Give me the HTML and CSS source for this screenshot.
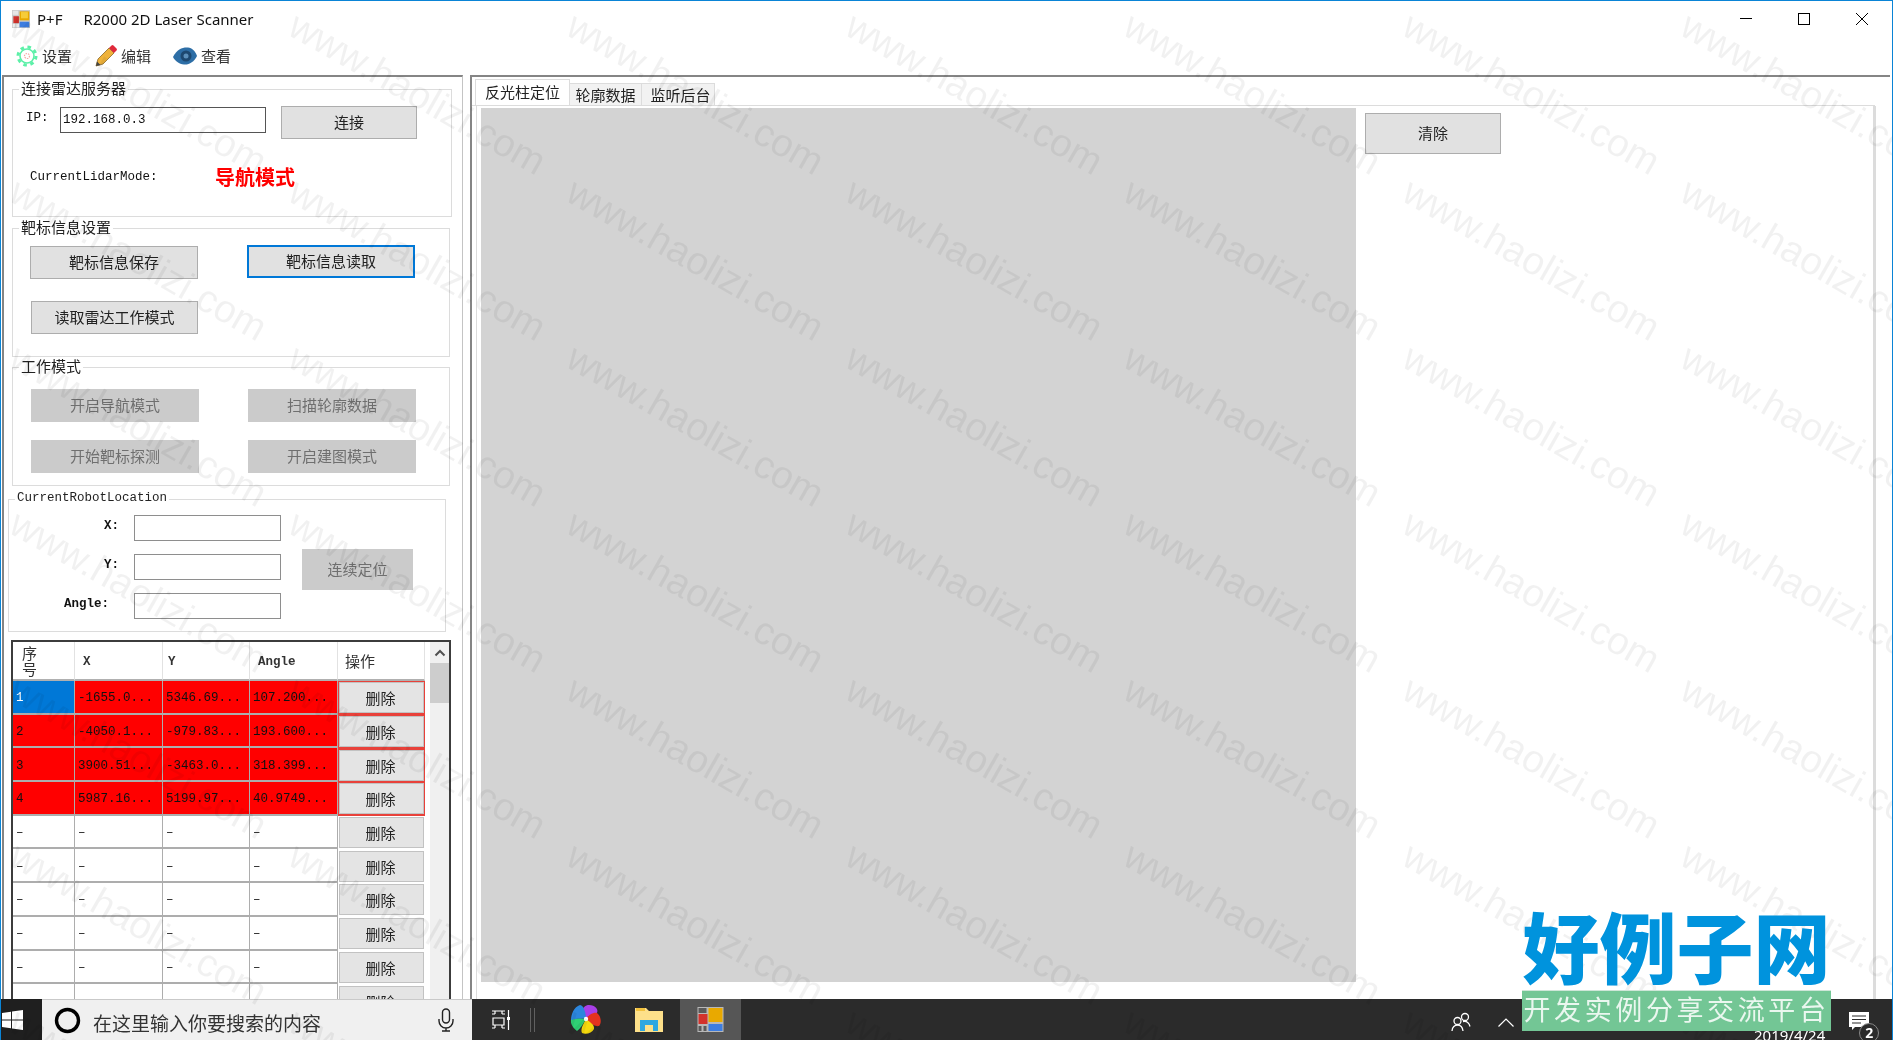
FILE: index.html
```html
<!DOCTYPE html>
<html lang="zh-CN">
<head>
  <meta charset="UTF-8">
  <title>P+F R2000 2D Laser Scanner</title>
  <link rel="stylesheet" href="styles.css">
</head>
<body>
  <div class="window">
    <div class="titlebar">
      <svg class="app-icon" viewBox="0 0 26 26"><rect width="26" height="26" fill="#c9c9c9"/><rect x="1" y="1" width="8" height="6" fill="#e6e6e6"/><rect x="11" y="2" width="14" height="13" fill="#e9a900"/><rect x="13" y="3" width="10" height="9" fill="#f6cc3a"/><rect x="2" y="9" width="8" height="10" fill="#d3322c"/><rect x="11" y="17" width="14" height="8" fill="#3d7de0"/><rect x="1" y="20" width="4" height="5" fill="#eee"/><rect x="6" y="20" width="4" height="5" fill="#eee"/></svg>
      <span class="title-name">P+F</span>
      <span class="title-text">R2000 2D Laser Scanner</span>
      <div class="window-buttons">
        <span class="win-btn"><svg width="12" height="12" viewBox="0 0 12 12"><path d="M0 5.500h12" stroke="#000"/></svg></span>
        <span class="win-btn"><svg width="12" height="12" viewBox="0 0 12 12"><rect x=".5" y=".5" width="11" height="11" fill="none" stroke="#000"/></svg></span>
        <span class="win-btn"><svg width="12" height="12" viewBox="0 0 12 12"><path d="M0 0l12 12M12 0L0 12" stroke="#000"/></svg></span>
      </div>
    </div>

    <div class="menubar">
      <div class="menu-item gear-item">
        <svg width="22" height="22" viewBox="0 0 22 22"><circle cx="11" cy="11" r="7" fill="#fff" stroke="#5cf0a8" stroke-width="1.600"/><circle cx="11" cy="11" r="9" fill="none" stroke="#5cf0a8" stroke-width="3" stroke-dasharray="3.500 3.600"/><circle cx="11" cy="11" r="2.500" fill="none" stroke="#f5a7a0" stroke-width="1.200" stroke-dasharray="1.500 1"/></svg>
        <span>设置</span>
      </div>
      <div class="menu-item pencil-item">
        <svg width="22" height="22" viewBox="0 0 22 22"><path d="M1 21l2-7L14 3l5 5L8 19z" fill="#efb23a" stroke="#8a6a2a" stroke-width=".8"/><path d="M1 21l1-4.500L5.500 20z" fill="#444"/><path d="M14 3l2.500-2.500a1.500 1.500 0 0 1 2 0l3 3a1.500 1.500 0 0 1 0 2L19 8z" fill="#e0293a"/></svg>
        <span>编辑</span>
      </div>
      <div class="menu-item eye-item">
        <svg width="24" height="20" viewBox="0 0 24 20"><path d="M0 11C4 3 10 1 15 1.500c4 .5 7 3 9 8.500-3 6-8 9-13 8.500C6 18 2 15 0 11z" fill="#2d6ea6"/><circle cx="13" cy="10" r="5.500" fill="#1d4870"/><circle cx="13" cy="10" r="2.500" fill="#5b8fba"/></svg>
        <span>查看</span>
      </div>
    </div>

    <div class="main">
      <div class="left-panel">
        <fieldset class="group group-link">
          <legend>连接雷达服务器</legend>
          <div class="ip-row">
            <label class="ip-label">IP:</label>
            <input class="text-input ip-input" type="text" value="192.168.0.3">
            <button class="btn connect-btn">连接</button>
          </div>
          <div class="mode-row">
            <span class="mode-label">CurrentLidarMode:</span>
            <span class="mode-value">导航模式</span>
          </div>
        </fieldset>

        <fieldset class="group group-target">
          <legend>靶标信息设置</legend>
          <div class="button-grid target-grid">
            <button class="btn">靶标信息保存</button>
            <button class="btn btn-focus">靶标信息读取</button>
            <button class="btn">读取雷达工作模式</button>
          </div>
        </fieldset>

        <fieldset class="group group-work">
          <legend>工作模式</legend>
          <div class="button-grid work-grid">
            <button class="btn" disabled>开启导航模式</button>
            <button class="btn" disabled>扫描轮廓数据</button>
            <button class="btn" disabled>开始靶标探测</button>
            <button class="btn" disabled>开启建图模式</button>
          </div>
        </fieldset>

        <fieldset class="group group-location">
          <legend>CurrentRobotLocation</legend>
          <div class="location-body">
            <div class="location-fields">
              <label>X:</label><input class="text-input" type="text">
              <label>Y:</label><input class="text-input" type="text">
              <label class="angle-label">Angle:</label><input class="text-input" type="text">
            </div>
            <button class="btn locate-btn" disabled>连续定位</button>
          </div>
        </fieldset>

        <div class="table-wrap">
          <table class="target-table">
            <colgroup><col class="col-no"><col class="col-x"><col class="col-y"><col class="col-angle"><col class="col-op"></colgroup>
            <thead>
              <tr><th class="th-no">序<br>号</th><th class="th-x">X</th><th>Y</th><th class="th-angle">Angle</th><th class="th-op">操作</th></tr>
            </thead>
            <tbody>
              <tr class="hit"><td class="selected">1</td><td>-1655.0...</td><td>5346.69...</td><td>107.200...</td><td class="op"><button>删除</button></td></tr>
              <tr class="hit"><td>2</td><td>-4050.1...</td><td>-979.83...</td><td>193.600...</td><td class="op"><button>删除</button></td></tr>
              <tr class="hit"><td>3</td><td>3900.51...</td><td>-3463.0...</td><td>318.399...</td><td class="op"><button>删除</button></td></tr>
              <tr class="hit"><td>4</td><td>5987.16...</td><td>5199.97...</td><td>40.9749...</td><td class="op"><button>删除</button></td></tr>
              <tr><td>–</td><td>–</td><td>–</td><td>–</td><td class="op"><button>删除</button></td></tr>
              <tr><td>–</td><td>–</td><td>–</td><td>–</td><td class="op"><button>删除</button></td></tr>
              <tr><td>–</td><td>–</td><td>–</td><td>–</td><td class="op"><button>删除</button></td></tr>
              <tr><td>–</td><td>–</td><td>–</td><td>–</td><td class="op"><button>删除</button></td></tr>
              <tr><td>–</td><td>–</td><td>–</td><td>–</td><td class="op"><button>删除</button></td></tr>
              <tr><td></td><td></td><td></td><td></td><td class="op"><button>删除</button></td></tr>
            </tbody>
          </table>
          <div class="scrollbar">
            <div class="scroll-up"><svg width="12" height="8" viewBox="0 0 12 8"><path d="M1.500 6.500L6 2l4.500 4.500" fill="none" stroke="#505050" stroke-width="2"/></svg></div>
            <div class="scroll-thumb"></div>
          </div>
        </div>
      </div>

      <div class="right-panel">
        <div class="tabs">
          <span class="tab tab-active">反光柱定位</span>
          <span class="tab tab-second">轮廓数据</span>
          <span class="tab tab-third">监听后台</span>
        </div>
        <div class="tab-page">
          <div class="canvas"></div>
          <button class="btn clear-btn">清除</button>
        </div>
      </div>
    </div>

    <div class="taskbar">
      <div class="start">
        <svg width="21" height="20" viewBox="0 0 21 20"><path d="M0 3l9-1.300V9.500H0zM10 1.500L21 0v9.500H10zM0 10.500h9v7.800L0 17zM10 10.500h11V20l-11-1.500z" fill="#fff"/></svg>
      </div>
      <div class="search">
        <svg class="cortana" width="27" height="27" viewBox="0 0 27 27"><circle cx="13.500" cy="13.500" r="11" fill="none" stroke="#000" stroke-width="3.400"/></svg>
        <span class="search-text">在这里输入你要搜索的内容</span>
        <svg class="mic" width="16" height="24" viewBox="0 0 16 24"><rect x="4.500" y="1" width="7" height="14" rx="3.500" fill="none" stroke="#222" stroke-width="1.400"/><path d="M1 11v2a7 7 0 0 0 14 0v-2M8 20v3M4 23h8" fill="none" stroke="#222" stroke-width="1.400"/></svg>
      </div>
      <div class="task-icons">
        <svg class="task-view" width="20" height="20" viewBox="0 0 20 20"><path d="M0 1h13M0 4h3M10 4h3M1 8h11v7H1zM0 18h3M10 18h3M3 18v-3M10 18v-3M3 1v3M10 1v3M16.500 0v20" fill="none" stroke="#fff" stroke-width="1.200"/><rect x="15" y="7" width="3" height="3" fill="#fff"/></svg>
        <span class="task-sep"></span>
        <svg class="pinwheel" width="30" height="31" viewBox="-15 -15 30 31"><path d="M0 0C-8-3-4-14 3-14 9-14 14-9 10-5 7-2 3-3 0 0z" fill="#a93fe8"/><path d="M0 0C2-4 8-7 11-6 15-3 16 4 13 7 9 8 3 4 0 0z" fill="#e5321f"/><path d="M0 0C4 3 9 6 8 10 6 14 0 16-4 14-6 10-2 4 0 0z" fill="#f5d90c"/><path d="M0 0C-3 5-6 10-9 12-13 9-16 5-15 0-10-1-4-1 0 0z" fill="#2fcf73"/><path d="M0 0C-6-1-11 0-15 1-15-5-12-12-6-14-2-14 0-5 0 0z" fill="#2c86dd"/><circle r="2.200" fill="#fff"/></svg>
        <svg class="folder" width="28" height="25" viewBox="0 0 28 25"><path d="M0 1h11l3 3h14v21H0z" fill="#fde08a"/><path d="M1 1h9v3H1z" fill="#f3c23e"/><path d="M5 24V13h18v11h-5v-6H10v6z" fill="#2ea7e0"/></svg>
        <div class="task-active">
          <svg width="27" height="25" viewBox="0 0 26 25"><rect width="26" height="25" fill="#b8b8b8"/><rect x="1" y="1" width="8" height="5" fill="#5a5a5a"/><rect x="11" y="1" width="14" height="14" fill="#e9a900"/><rect x="1" y="7" width="9" height="10" fill="#d3322c"/><rect x="11" y="17" width="14" height="7" fill="#3d7de0"/><rect x="1" y="19" width="3" height="5" fill="#5a5a5a"/><rect x="6" y="19" width="3" height="5" fill="#5a5a5a"/></svg>
        </div>
      </div>
      <div class="tray">
        <svg class="people" width="20" height="20" viewBox="0 0 20 20"><circle cx="14" cy="5" r="3.500" fill="none" stroke="#fff" stroke-width="1.300"/><circle cx="6.500" cy="9" r="3.500" fill="none" stroke="#fff" stroke-width="1.300"/><path d="M1 19c0-4 3-6 5.500-6s5 2 5.500 6M12 9.500c3-.5 6 1 7 5" fill="none" stroke="#fff" stroke-width="1.300"/></svg>
        <svg class="chevron" width="16" height="9" viewBox="0 0 16 9"><path d="M.5 8.500L8 1l7.500 7.500" fill="none" stroke="#fff" stroke-width="1.200"/></svg>
        <span class="tray-date">2019/4/24</span>
        <div class="notify">
          <svg width="20" height="18" viewBox="0 0 20 18"><path d="M0 0h20v15H6l-3 3v-3H0z" fill="#fff"/><path d="M3 4h14M3 7.500h14M3 11h9" stroke="#2b2b2b"/></svg>
          <span class="notify-badge">2</span>
        </div>
      </div>
    </div>

    <div class="watermarks">
      <span>www.haolizi.com</span><span>www.haolizi.com</span><span>www.haolizi.com</span><span>www.haolizi.com</span><span>www.haolizi.com</span><span>www.haolizi.com</span><span>www.haolizi.com</span>
      <span>www.haolizi.com</span><span>www.haolizi.com</span><span>www.haolizi.com</span><span>www.haolizi.com</span><span>www.haolizi.com</span><span>www.haolizi.com</span><span>www.haolizi.com</span>
      <span>www.haolizi.com</span><span>www.haolizi.com</span><span>www.haolizi.com</span><span>www.haolizi.com</span><span>www.haolizi.com</span><span>www.haolizi.com</span><span>www.haolizi.com</span>
      <span>www.haolizi.com</span><span>www.haolizi.com</span><span>www.haolizi.com</span><span>www.haolizi.com</span><span>www.haolizi.com</span><span>www.haolizi.com</span><span>www.haolizi.com</span>
      <span>www.haolizi.com</span><span>www.haolizi.com</span><span>www.haolizi.com</span><span>www.haolizi.com</span><span>www.haolizi.com</span><span>www.haolizi.com</span><span>www.haolizi.com</span>
      <span>www.haolizi.com</span><span>www.haolizi.com</span><span>www.haolizi.com</span><span>www.haolizi.com</span><span>www.haolizi.com</span><span>www.haolizi.com</span><span>www.haolizi.com</span>
      <span>www.haolizi.com</span><span>www.haolizi.com</span><span>www.haolizi.com</span><span>www.haolizi.com</span><span>www.haolizi.com</span><span>www.haolizi.com</span><span>www.haolizi.com</span>
    </div>

    <div class="site-logo">
      <div class="logo-name">好例子网</div>
      <div class="logo-slogan">开发实例分享交流平台</div>
    </div>
  </div>
</body>
</html>
```

FILE: styles.css
```css
:root {
  --sans: "Noto Sans", "Noto Sans CJK SC", sans-serif;
  --mono: "Liberation Mono", "Noto Sans CJK SC", monospace;
  --cjk: "Noto Sans CJK SC", sans-serif;
  --line: #dcdcdc;
  --panel-line: #858585;
}
* {
  box-sizing: border-box;
}
body {
  margin: 0;
  background: #fff;
  font-family: var(--mono);
  font-size: 12.5px;
  color: #111;
}
.window {
  position: relative;
  width: 1893px;
  height: 1040px;
  overflow: hidden;
  display: flex;
  flex-direction: column;
  border-top: 1px solid #0a84d6;
  border-left: 1px solid #0a84d6;
  border-right: 1px solid #0a84d6;
  background: #fff;
  filter: blur(0.45px);
}

/* title + menu */
.titlebar {
  height: 36px;
  flex: none;
  display: flex;
  align-items: center;
  padding-left: 11px;
  font-family: var(--sans);
  font-size: 15px;
  color: #111;
}
.app-icon {
  width: 18px;
  height: 18px;
}
.title-name {
  margin-left: 7px;
}
.title-text {
  margin-left: 21px;
}
.window-buttons {
  margin-left: auto;
  margin-right: 1px;
  display: flex;
}
.win-btn {
  width: 58px;
  display: flex;
  justify-content: center;
}
.menubar {
  height: 38px;
  flex: none;
  display: flex;
  align-items: center;
  padding-left: 15px;
  font-family: var(--cjk);
  font-size: 15px;
  color: #333;
}
.menu-item {
  display: flex;
  align-items: center;
  gap: 4px;
}
.menu-item span {
  padding-bottom: 2px;
}
.pencil-item {
  margin-left: 23px;
}
.eye-item {
  margin-left: 22px;
}

/* panels */
.main {
  height: 924px;
  flex: none;
  display: flex;
}
.left-panel {
  width: 461px;
  margin-left: 1px;
  display: flex;
  flex-direction: column;
  border-top: 2px solid var(--panel-line);
  border-left: 2px solid var(--panel-line);
  border-right: 1px solid #c4c4c4;
}
.right-panel {
  width: 1420px;
  margin-left: 7px;
  display: flex;
  flex-direction: column;
  border-top: 2px solid var(--panel-line);
  border-left: 2px solid var(--panel-line);
}

/* group boxes */
.group {
  flex: none;
  min-width: 0;
  margin: 0;
  padding: 0;
  border: 1px solid var(--line);
}
.group legend {
  height: 18px;
  line-height: 16px;
  padding: 0 2px;
  margin-left: 6px;
  font-family: var(--cjk);
  font-size: 15px;
  color: #222;
}
.group-link {
  width: 440px;
  height: 137px;
  margin: 3px 0 0 8px;
  padding-top: 8px;
}
.group-target {
  width: 438px;
  height: 138px;
  margin: 2px 0 0 8px;
}
.group-work {
  width: 438px;
  height: 128px;
  margin: 1px 0 0 8px;
}
.group-location {
  width: 438px;
  height: 142px;
  margin: 4px 0 0 4px;
}
.group-location legend {
  font-family: var(--mono);
  font-size: 12.5px;
}
.btn {
  height: 33px;
  padding: 0 0 2px;
  border: 1px solid #adadad;
  background: #e1e1e1;
  font-family: var(--cjk);
  font-size: 15px;
  color: #222;
}
.btn:disabled {
  border-color: #cbcbcb;
  background: #cbcbcb;
  color: #6f6f6f;
}
.btn-focus {
  margin-top: -1px;
  border: 2px solid #0078d7;
}
.text-input {
  height: 26px;
  padding: 0 2px;
  border: 1px solid #8e8e8e;
  background: #fff;
  font-family: var(--mono);
  font-size: 12.5px;
  color: #111;
  outline: none;
}
.ip-row {
  display: flex;
  align-items: flex-start;
  padding-left: 13px;
}
.ip-label {
  width: 34px;
  padding-top: 5px;
}
.ip-input {
  width: 206px;
  margin-top: 1px;
  border: 1px solid #555;
}
.connect-btn {
  width: 136px;
  height: 33px;
  margin-left: 15px;
}
.mode-row {
  height: 28px;
  margin-top: 23px;
  display: flex;
  align-items: center;
  padding-left: 17px;
}
.mode-label {
  width: 185px;
  padding-top: 2px;
}
.mode-value {
  font-family: var(--cjk);
  font-size: 20px;
  font-weight: 700;
  color: #f00;
}
.button-grid {
  display: grid;
  grid-template-columns: 168px 168px;
}
.target-grid {
  padding: 9px 0 0 17px;
  column-gap: 49px;
  row-gap: 22px;
}
.target-grid .btn:last-child {
  margin-left: 1px;
}
.work-grid {
  padding: 13px 0 0 18px;
  column-gap: 49px;
  row-gap: 18px;
}
.location-body {
  display: flex;
  padding-top: 7px;
}
.location-fields {
  display: grid;
  grid-template-columns: 125px 147px;
  row-gap: 13px;
}
.location-fields label {
  padding: 4px 15px 0 0;
  text-align: right;
  font-weight: 700;
}
.location-fields .angle-label {
  padding-right: 25px;
}
.locate-btn {
  width: 111px;
  height: 41px;
  margin: 34px 0 0 21px;
}

/* table */
.table-wrap {
  flex: none;
  width: 440px;
  height: 359px;
  margin: 8px 0 0 7px;
  display: flex;
  overflow: hidden;
  border-top: 2px solid #3c3c3c;
  border-left: 2px solid #3c3c3c;
  border-right: 2px solid #3c3c3c;
}
.target-table {
  flex: none;
  width: 412px;
  height: 376px;
  table-layout: fixed;
  border-collapse: separate;
  border-spacing: 0;
}
.col-no { width: 62px; }
.col-x { width: 88px; }
.col-y { width: 87px; }
.col-angle { width: 88px; }
.col-op { width: 87px; }
.target-table th {
  height: 39px;
  padding: 3px 0 0 5px;
  border-right: 1px solid #e2e2e2;
  border-bottom: 2px solid #b0b0b0;
  text-align: left;
  font-family: var(--mono);
  font-size: 12.5px;
  font-weight: 700;
  color: #333;
}
.target-table .th-x,
.target-table .th-angle {
  padding-left: 8px;
}
.target-table .th-no {
  padding: 0 0 0 9px;
  font-family: var(--cjk);
  font-size: 15px;
  font-weight: 400;
  line-height: 16px;
}
.target-table .th-op {
  padding: 0 0 0 7px;
  font-family: var(--cjk);
  font-size: 15px;
  font-weight: 400;
}
.target-table td {
  height: 33.67px;
  padding: 3px 0 0 3px;
  overflow: hidden;
  white-space: nowrap;
  border-right: 1px solid #adadad;
  border-bottom: 2px solid #adadad;
  font-size: 12.5px;
  color: #111;
}
.target-table .hit td {
  background: #f00;
}
.target-table .hit .selected {
  background: #0078d7;
  color: #fff;
}
.target-table td.op,
.target-table .hit td.op {
  padding: 1px;
  border-right: none;
  border-bottom: none;
}
.target-table .hit td.op {
  background: #e8413a;
}
.op button {
  display: block;
  width: 100%;
  height: 31px;
  padding: 0 2px 0 0;
  border: 1px solid #c2c2c2;
  background: #e4e4e4;
  font-family: var(--cjk);
  font-size: 15px;
  color: #222;
}
.scrollbar {
  width: 19px;
  margin-left: 5px;
  flex: none;
  background: #f0f0f0;
}
.scroll-up {
  height: 21px;
  display: flex;
  align-items: center;
  justify-content: center;
}
.scroll-thumb {
  height: 40px;
  background: #cdcdcd;
}

/* right side */
.tabs {
  flex: none;
  width: 1403px;
  height: 29px;
  padding: 3px 0 0 3px;
  display: flex;
  align-items: flex-end;
  border-bottom: 1px solid var(--line);
  font-family: var(--cjk);
  font-size: 15px;
  color: #222;
}
.tab {
  height: 22px;
  line-height: 21px;
  text-align: center;
  background: #f2f2f2;
  border: 1px solid var(--line);
  border-bottom: none;
}
.tab-active {
  width: 95px;
  height: 26px;
  line-height: 24px;
  background: #fff;
}
.tab-second {
  width: 72px;
  border-left: none;
}
.tab-third {
  width: 73px;
  border-left: none;
  padding-left: 5px;
}
.tab-page {
  flex: 1;
  width: 1400px;
  margin-left: 4px;
  padding: 2px 0 0 4px;
  display: flex;
  align-items: flex-start;
  border-left: 1px solid var(--line);
  border-right: 3px solid var(--line);
}
.canvas {
  width: 875px;
  height: 874px;
  flex: none;
  background: #d3d3d3;
}
.clear-btn {
  width: 136px;
  height: 41px;
  margin: 5px 0 0 9px;
  flex: none;
}

/* taskbar */
.taskbar {
  position: relative;
  flex: none;
  width: 1893px;
  height: 41px;
  margin-left: -1px;
  display: flex;
  background: #2b2b2b;
  color: #fff;
  overflow: hidden;
}
.start {
  width: 42px;
  flex: none;
  display: flex;
  align-items: center;
  padding-left: 2px;
  background: #1f1f1f;
}
.search {
  width: 430px;
  flex: none;
  display: flex;
  align-items: center;
  padding-left: 12px;
  background: #f0f0f0;
  border-top: 1px solid #c9c9c9;
}
.search-text {
  margin-left: 12px;
  padding-top: 4px;
  font-family: var(--cjk);
  font-size: 19px;
  color: #333;
}
.mic {
  margin-left: auto;
  margin-right: 18px;
}
.task-icons {
  width: 277px;
  flex: none;
  display: flex;
  align-items: center;
}
.task-view {
  margin-left: 20px;
}
.task-sep {
  width: 5px;
  height: 24px;
  margin-left: 18px;
  border-left: 1px solid #606060;
  border-right: 1px solid #606060;
}
.pinwheel {
  margin-left: 36px;
}
.folder {
  margin-left: 34px;
}
.task-active {
  width: 61px;
  height: 41px;
  margin-left: 17px;
  display: flex;
  align-items: center;
  justify-content: center;
  background: #565656;
}
.tray {
  flex: 1;
  display: flex;
  align-items: flex-start;
  padding-top: 13px;
}
.people {
  margin-left: 702px;
}
.chevron {
  margin: 6px 0 0 27px;
}
.tray-date {
  margin: 15px 0 0 240px;
  font-family: var(--sans);
  font-size: 15px;
  line-height: 16px;
  white-space: nowrap;
}
.notify {
  position: relative;
  margin-left: 24px;
}
.notify-badge {
  position: absolute;
  left: 10px;
  top: 11px;
  width: 20px;
  height: 20px;
  border-radius: 50%;
  border: 1px solid #888;
  background: #2b2b2b;
  text-align: center;
  line-height: 18px;
  font-family: var(--sans);
  font-size: 14px;
  font-weight: 700;
}

/* overlays */
.watermarks {
  position: absolute;
  inset: 0;
  overflow: hidden;
  pointer-events: none;
  display: grid;
  grid-template-columns: repeat(7, 278.5px);
  grid-auto-rows: 166px;
  padding: 4px 0 0 22px;
}
.watermarks span {
  display: block;
  width: 300px;
  height: 40px;
  line-height: 40px;
  white-space: nowrap;
  font-family: "Liberation Sans", sans-serif;
  font-size: 39px;
  color: rgba(0, 0, 0, 0.055);
  transform-origin: 0 0;
  transform: rotate(29.6deg);
}
.site-logo {
  position: absolute;
  left: 1521px;
  top: 902px;
  width: 309px;
}
.logo-name {
  height: 87px;
  line-height: 84px;
  text-align: center;
  white-space: nowrap;
  font-family: var(--cjk);
  font-size: 77px;
  font-weight: 900;
  color: #0093dd;
}
.logo-slogan {
  height: 41px;
  line-height: 36px;
  text-align: center;
  white-space: nowrap;
  border-top: 1px solid #cfe6d8;
  background: #73c695;
  font-family: var(--cjk);
  font-size: 27px;
  letter-spacing: 3.600px;
  color: rgba(255, 255, 255, 0.85);
}
```
